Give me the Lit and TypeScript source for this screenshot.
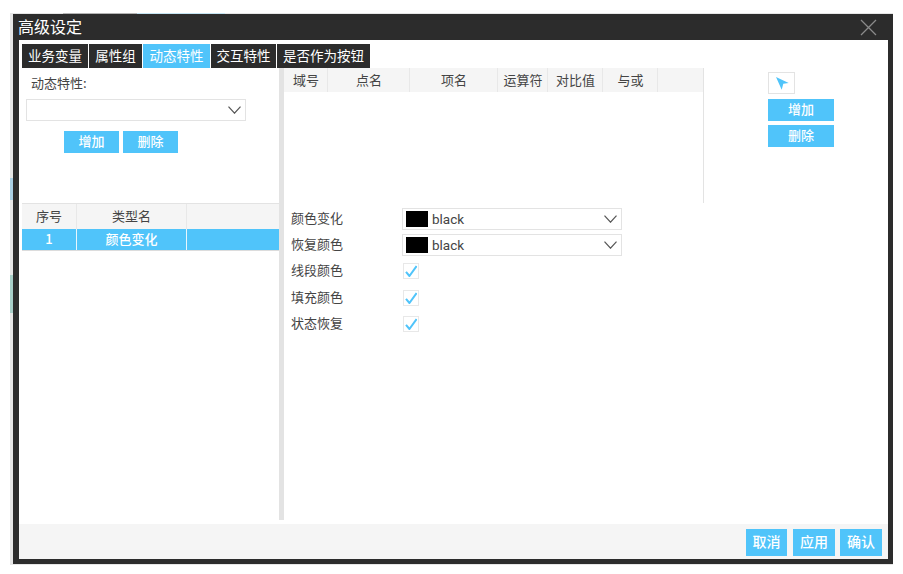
import { LitElement, html, css, svg } from "lit";
import { customElement } from "lit/decorators.js";

const chevron = svg`<svg class="chevron" width="13" height="8" viewBox="0 0 13 8"><path d="M0.5 0.6 L6.5 7.2 L12.5 0.6" fill="none" stroke="#555" stroke-width="1.2"/></svg>`;
const tick = svg`<svg class="tick" width="12" height="12" viewBox="0 0 12 12"><path d="M1 6.8 L4.4 11 L11.6 1" fill="none" stroke="#50c4fa" stroke-width="2"/></svg>`;

@customElement("app-root")
export class AppRoot extends LitElement {
  static styles = css`
    :host {
      display: block;
      width: 903px;
      height: 574px;
      box-sizing: border-box;
      padding: 13px 10px 9px 10px;
      background: #fff;
      font-family: "Noto Sans CJK SC", "Liberation Sans", sans-serif;
      font-size: 13px;
      color: #444;
    }
    .dialog {
      width: 883px;
      height: 552px;
      box-sizing: border-box;
      padding: 1px 0 1px 3px;
      background:
        linear-gradient(#a9cfe3, #a9cfe3) 0 165px / 3px 22px no-repeat,
        linear-gradient(#a8cfc8, #a8cfc8) 0 262px / 3px 38px no-repeat,
        linear-gradient(#b4b4b4, #b4b4b4) 53px 0 / 74px 1px no-repeat,
        linear-gradient(#c4e4f2, #c4e4f2) 127px 0 / 88px 1px no-repeat,
        #e6e6e6;
      display: flex;
      flex-direction: column;
    }
    .titlebar {
      height: 26px;
      flex: none;
      background: #2c2c2c;
      color: #fff;
      font-size: 16px;
      line-height: 23px;
      padding-left: 5px;
      padding-bottom: 2px;
      box-sizing: border-box;
      display: flex;
      justify-content: space-between;
      align-items: center;
    }
    .close {
      margin: 2px 16px 0 0;
      display: block;
    }
    .frame {
      flex: 1;
      background: #fff;
      border: solid #2c2c2c;
      border-width: 0 5px 5px 6px;
      display: flex;
      flex-direction: column;
      min-height: 0;
    }
    .content {
      flex: 1;
      min-height: 0;
      padding: 4px 0 4px 3px;
      display: flex;
      flex-direction: column;
    }
    .tabs {
      display: flex;
      height: 24px;
      flex: none;
    }
    .tab {
      background: #2c2c2c;
      color: #fff;
      font-size: 13.5px;
      line-height: 22px;
      text-align: center;
      margin-right: 1px;
    }
    .tab.active {
      background: #50c4fa;
    }
    .columns {
      flex: 1;
      min-height: 0;
      display: grid;
      grid-template-columns: 257px 5px 1fr;
    }
    .left {
      display: flex;
      flex-direction: column;
    }
    .splitter {
      background: #e3e3e3;
    }
    .right {
      display: flex;
      flex-direction: column;
    }
    .picker {
      height: 135px;
      flex: none;
      box-sizing: border-box;
      padding: 7px 0 0 4px;
    }
    .picker-label {
      padding-left: 5px;
      height: 24px;
      line-height: 16px;
    }
    .select {
      box-sizing: border-box;
      width: 220px;
      height: 22px;
      border: 1px solid #e3e3e3;
      background: #fff;
      display: flex;
      align-items: center;
      padding: 0 4px 0 3px;
      color: #444;
    }
    .select .chevron {
      margin-left: auto;
    }
    .swatch {
      width: 22px;
      height: 16px;
      background: #000;
      margin-right: 4px;
    }
    .select .value {
      font-family: Roboto, "Liberation Sans", sans-serif;
      font-size: 13.5px;
      line-height: 18px;
      padding-bottom: 1px;
    }
    .btn {
      background: #50c4fa;
      color: #fff;
      font-size: 13px;
      font-weight: 500;
      text-align: center;
      display: block;
      line-height: 20px;
      height: 22px;
    }
    .picker-actions {
      display: flex;
      gap: 4px;
      margin: 10px 0 0 38px;
    }
    .picker-actions .btn {
      width: 55px;
    }
    .type-table {
      border-top: 1px solid #e3e3e3;
    }
    .type-row {
      display: grid;
      grid-template-columns: 54px 109px 1fr;
      column-gap: 1px;
      text-align: center;
    }
    .type-row.head {
      height: 25px;
      line-height: 23px;
      background: #e8e8e8;
    }
    .type-row.head > div {
      background: #f5f5f5;
    }
    .type-row.sel {
      height: 22px;
      line-height: 19px;
      background: #e8f6fd;
      color: #fff;
      font-weight: 500;
      border-bottom: 1px solid #dcdcdc;
      box-sizing: border-box;
    }
    .type-row.sel > div {
      background: #50c4fa;
    }
    .top {
      height: 135px;
      flex: none;
      display: grid;
      grid-template-columns: 420px 1fr;
    }
    .cond {
      border-right: 1px solid #e3e3e3;
    }
    .cond-head {
      height: 24px;
      background: #f5f5f5;
      display: grid;
      grid-template-columns: 44px 82px 88px 50px 55px 55px;
      line-height: 24px;
      text-align: center;
    }
    .cond-head > div {
      border-right: 1px solid #e8e8e8;
      padding-left: 1px;
    }
    .tools {
      padding: 4px 0 0 64px;
      display: flex;
      flex-direction: column;
      align-items: flex-start;
    }
    .tools .btn {
      width: 66px;
      margin-bottom: 4px;
    }
    .arrow-btn {
      box-sizing: border-box;
      width: 27px;
      height: 22px;
      border: 1px solid #e3e3e3;
      padding: 4px 0 0 7px;
      margin-bottom: 5px;
    }
    .arrow-btn svg {
      display: block;
    }
    .form {
      padding: 5px 0 0 7px;
      display: grid;
      grid-template-columns: 111px 220px;
      grid-template-rows: 22px 22px 22px 24px 20px;
      row-gap: 4px;
      align-items: center;
    }
    .form .label {
      line-height: 20px;
      height: 22px;
    }
    .check {
      box-sizing: border-box;
      width: 16px;
      height: 16px;
      border: 1px solid #e8e8e8;
      margin-left: 1px;
      padding: 1px 0 0 1px;
    }
    .tick {
      display: block;
    }
    .footer {
      height: 35px;
      flex: none;
      background: #f5f5f5;
      display: flex;
      justify-content: flex-end;
      align-items: flex-start;
      padding: 5px 6px 0 0;
      box-sizing: border-box;
    }
    .footer .btn {
      width: 42px;
      height: 27px;
      line-height: 25px;
      font-size: 14px;
      margin-left: 5px;
    }
    .footer .btn:first-child {
      width: 41px;
      margin-right: 1px;
    }
  `;

  tabs = [
    { name: "业务变量", width: 66 },
    { name: "属性组", width: 53 },
    { name: "动态特性", width: 67, active: true },
    { name: "交互特性", width: 65 },
    { name: "是否作为按钮", width: 93 },
  ];
  condColumns = ["域号", "点名", "项名", "运算符", "对比值", "与或"];

  renderSelect(value: string) {
    return html`<div class="select">
      <span class="swatch"></span><span class="value">${value}</span>${chevron}
    </div>`;
  }

  renderCheck(label: string) {
    return html`<div class="label">${label}</div>
      <div class="check">${tick}</div>`;
  }

  render() {
    return html`<div class="dialog">
      <div class="titlebar">
        <span>高级设定</span>
        <svg class="close" width="17" height="17" viewBox="0 0 17 17">
          <path d="M1 1 L16 16 M16 1 L1 16" stroke="#8a8a8a" stroke-width="1.3" fill="none" />
        </svg>
      </div>
      <div class="frame">
        <div class="content">
          <div class="tabs">
            ${this.tabs.map(
              (t) => html`<div class="tab ${t.active ? "active" : ""}" style="width:${t.width}px">${t.name}</div>`
            )}
          </div>
          <div class="columns">
            <div class="left">
              <div class="picker">
                <div class="picker-label">动态特性:</div>
                <div class="select">${chevron}</div>
                <div class="picker-actions">
                  <span class="btn">增加</span><span class="btn">删除</span>
                </div>
              </div>
              <div class="type-table">
                <div class="type-row head"><div>序号</div><div>类型名</div><div></div></div>
                <div class="type-row sel"><div>1</div><div>颜色变化</div><div></div></div>
              </div>
            </div>
            <div class="splitter"></div>
            <div class="right">
              <div class="top">
                <div class="cond">
                  <div class="cond-head">
                    ${this.condColumns.map((c) => html`<div>${c}</div>`)}
                  </div>
                </div>
                <div class="tools">
                  <div class="arrow-btn">
                    <svg width="14" height="14" viewBox="0 0 14 14"><path d="M0 0 L12.7 6 L7.3 6.7 L5.7 12.7 Z" fill="#50c4fa" /></svg>
                  </div>
                  <span class="btn">增加</span>
                  <span class="btn">删除</span>
                </div>
              </div>
              <div class="form">
                <div class="label">颜色变化</div>
                ${this.renderSelect("black")}
                <div class="label">恢复颜色</div>
                ${this.renderSelect("black")}
                ${this.renderCheck("线段颜色")}
                ${this.renderCheck("填充颜色")}
                ${this.renderCheck("状态恢复")}
              </div>
            </div>
          </div>
        </div>
        <div class="footer">
          <span class="btn">取消</span><span class="btn">应用</span><span class="btn">确认</span>
        </div>
      </div>
    </div>`;
  }
}
